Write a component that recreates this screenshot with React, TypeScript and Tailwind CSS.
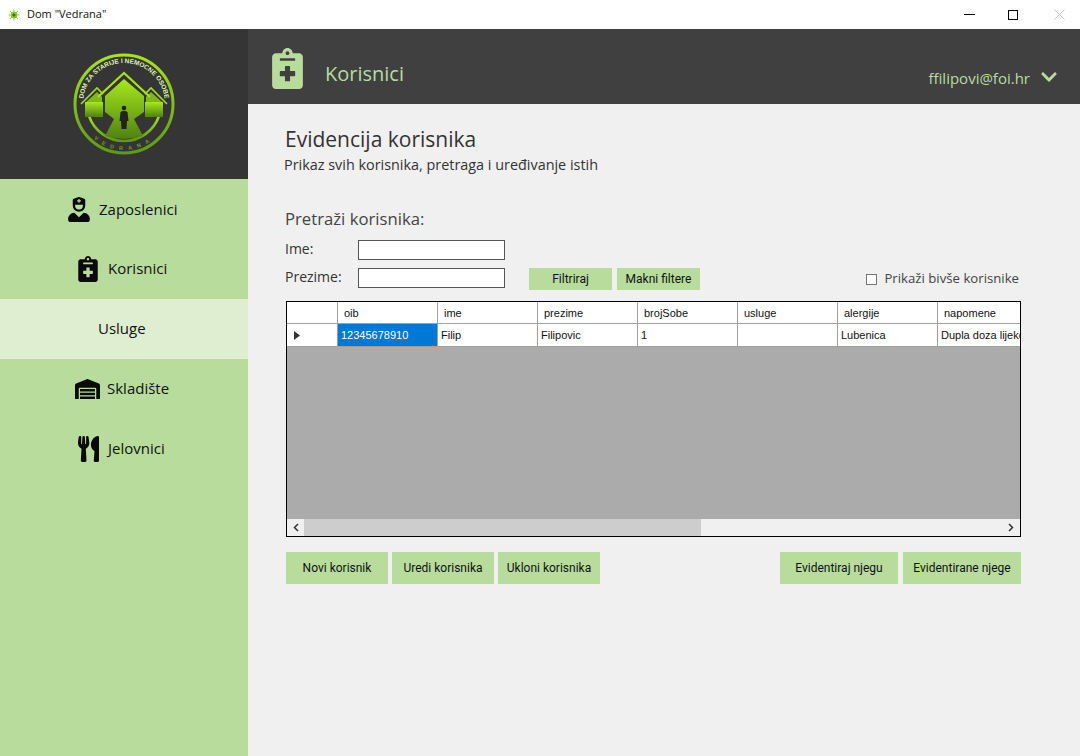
import { FaChevronDown, FaNotesMedical, FaUserNurse, FaUtensils, FaWarehouse } from "react-icons/fa";

const columns = ["oib", "ime", "prezime", "brojSobe", "usluge", "alergije", "napomene"];
const cells = ["12345678910", "Filip", "Filipovic", "1", "", "Lubenica", "Dupla doza lijekova"];

function Logo() {
  return (
    <svg width="104" height="104" viewBox="0 0 104 104">
      <defs>
        <linearGradient id="ring" x1="0" y1="0" x2="0" y2="1">
          <stop offset="0" stopColor="#a6e51a" />
          <stop offset="1" stopColor="#5f9a12" />
        </linearGradient>
        <linearGradient id="house" x1="0" y1="0" x2="0" y2="1">
          <stop offset="0" stopColor="#a8e81c" />
          <stop offset="1" stopColor="#4f8210" />
        </linearGradient>
        <path id="topArc" d="M 11 52 A 41 41 0 0 1 93 52" />
        <path id="bottomArc" d="M 10.3 71.4 A 46 46 0 0 0 93.7 71.4" />
      </defs>
      <circle cx="52" cy="52" r="49" fill="none" stroke="url(#ring)" strokeWidth="3" />
      <path d="M 17 64 A 37 37 0 0 0 87 64" fill="none" stroke="url(#ring)" strokeWidth="2.5" />
      {/* side roofs */}
      <path d="M 9 52 L 25 36 L 31 42 M 95 52 L 79 36 L 73 42" fill="none" stroke="#a0e01a" strokeWidth="1.6" />
      <path d="M 13 51 L 25 40 L 30 45 L 30 50 Z M 91 51 L 79 40 L 74 45 L 74 50 Z" fill="#7fb814" />
      {/* side blocks */}
      <path d="M 13 50 H 31 V 65 H 13 Z M 73 50 H 91 V 65 H 73 Z" fill="url(#house)" />
      {/* main roof */}
      <path d="M 26 45 L 52 21 L 78 45" fill="none" stroke="#a4e41a" strokeWidth="2.2" />
      {/* main house and road */}
      <path d="M 33 44 L 52 27 L 72 44 V 60 L 62 67 L 71 84 Q 52 90 33 84 L 42 67 L 33 60 Z" fill="url(#house)" />
      {/* person */}
      <circle cx="52" cy="56" r="2.3" fill="#222" />
      <path d="M 48.5 60 Q 52 57.5 55.5 60 L 56.5 69 L 55 69 L 54.5 77 L 49.5 77 L 49 69 L 47.5 69 Z" fill="#222" />
      <text fontFamily="'Liberation Sans', sans-serif" fontSize="6.5" fontWeight="700" fill="#def5a8">
        <textPath href="#topArc" startOffset="50%" textAnchor="middle">DOM ZA STARIJE I NEMOCNE OSOBE</textPath>
      </text>
      <text fontFamily="'Liberation Sans', sans-serif" fontSize="5.5" fontWeight="700" fill="#6f9a1f" letterSpacing="5.5">
        <textPath href="#bottomArc" startOffset="50%" textAnchor="middle">VEDRANA</textPath>
      </text>
    </svg>
  );
}

function AppIcon() {
  return (
    <svg width="12" height="12" viewBox="0 0 12 12" className="shrink-0">
      <circle cx="6" cy="6" r="3.2" fill="#7fbf1a" />
      <path d="M6 0.5V11.5M0.5 6H11.5M2 2L10 10M10 2L2 10" stroke="#8fcf2a" strokeWidth="1" />
      <circle cx="6" cy="6" r="1.5" fill="#3a6a10" />
    </svg>
  );
}

function NavItem({ label, icon, active, pl, gap, lift = "-mt-[2px]" }: { label: string; icon?: React.ReactNode; active?: boolean; pl: string; gap: string; lift?: string }) {
  return (
    <div className={`flex h-[60px] items-center ${pl} ${gap} ${active ? "bg-[#dfeed0]" : ""}`}>
      {icon}
      <span className={`${lift} font-['Open_Sans',sans-serif] text-[15px] text-[#111]`}>{label}</span>
    </div>
  );
}

function GreenButton({ label, w, h = "h-8" }: { label: string; w: string; h?: string }) {
  return (
    <div className={`flex ${w} ${h} items-center justify-center bg-[#b8dc9c] font-['Roboto',sans-serif] text-xs text-[#111]`}>
      {label}
    </div>
  );
}

export default function App() {
  return (
    <div className="flex h-[756px] w-[1080px] flex-col overflow-hidden bg-white font-['Open_Sans',sans-serif]">
      {/* title bar */}
      <div className="flex h-[29px] items-center bg-white pl-2">
        <AppIcon />
        <span className="ml-[7px] font-['Open_Sans',sans-serif] text-[11px] text-[#111]">Dom "Vedrana"</span>
        <div className="ml-auto flex items-center">
          <div className="h-px w-[11px] bg-black" />
          <div className="ml-[33px] h-[10px] w-[10px] border border-black" />
          <svg width="11" height="11" viewBox="0 0 11 11" className="ml-[36px] mr-[15px]">
            <path d="M0.5 0.5L10.5 10.5M10.5 0.5L0.5 10.5" stroke="#c4c4c4" strokeWidth="1" />
          </svg>
        </div>
      </div>

      <div className="flex min-h-0 flex-1">
        {/* sidebar */}
        <aside className="flex w-[248px] shrink-0 flex-col bg-[#b8dc9c]">
          <div className="flex h-[150px] items-center justify-center bg-[#353535]">
            <Logo />
          </div>
          <NavItem lift="mt-0" pl="pl-[68px]" gap="gap-[9px]" label="Zaposlenici" icon={<FaUserNurse className="h-[25px] w-[22px] text-[#0a0a0a]" />} />
          <NavItem pl="pl-[78px]" gap="gap-[10px]" label="Korisnici" icon={<FaNotesMedical className="h-[26px] w-[20px] text-[#0a0a0a]" />} />
          <NavItem active pl="pl-[98px]" gap="gap-0" label="Usluge" />
          <NavItem pl="pl-[75px]" gap="gap-[7px]" label="Skladište" icon={<FaWarehouse className="h-[20px] w-[25px] text-[#0a0a0a]" />} />
          <NavItem pl="pl-[78px]" gap="gap-[9px]" label="Jelovnici" icon={<FaUtensils className="h-[26px] w-[21px] text-[#0a0a0a]" />} />
        </aside>

        <main className="flex min-w-0 flex-1 flex-col bg-[#f0f0f0]">
          {/* header */}
          <header className="flex h-[75px] items-center bg-[#404040] pl-6 pr-[22px]">
            <FaNotesMedical className="mt-[4px] h-[41px] w-[31px] text-[#b8dc9c]" />
            <span className="ml-[22px] mt-[14px] text-[20px] text-[#b8dc9c]">Korisnici</span>
            <div className="ml-auto mt-[24px] flex items-center gap-[10px] text-[#b8dc9c]">
              <span className="text-[15px]">ffilipovi@foi.hr</span>
              <FaChevronDown className="-mt-[4px] h-[18px] w-[18px]" />
            </div>
          </header>

          <div className="flex flex-col pl-[36px]">
            <h1 className="ml-px mt-[21px] text-[21px] leading-7 text-[#333]">Evidencija korisnika</h1>
            <p className="mt-[2px] text-[14.4px] leading-5 text-[#333]">Prikaz svih korisnika, pretraga i uređivanje istih</p>

            <h2 className="ml-px mt-[32px] text-[16.7px] leading-6 text-[#444]">Pretraži korisnika:</h2>

            {/* filters */}
            <div className="ml-px mt-[9px] flex h-5 w-[735px] items-center">
              <span className="-mt-[2px] w-[73px] text-sm text-[#333]">Ime:</span>
              <div className="h-5 w-[147px] border border-[#555] bg-white" />
            </div>
            <div className="ml-px mt-2 flex h-5 w-[735px] items-center">
              <span className="-mt-[2px] w-[73px] text-sm text-[#333]">Prezime:</span>
              <div className="h-5 w-[147px] border border-[#555] bg-white" />
              <div className="ml-6 mt-[2px] flex gap-[5px]">
                <GreenButton label="Filtriraj" w="w-[83px]" h="h-[22px]" />
                <GreenButton label="Makni filtere" w="w-[83px]" h="h-[22px]" />
              </div>
              <div className="ml-auto mt-[2px] flex items-center gap-[7px] pr-px">
                <div className="h-[11px] w-[11px] border border-[#777] bg-white" />
                <span className="text-[13.2px] text-[#444]">Prikaži bivše korisnike</span>
              </div>
            </div>

            {/* grid */}
            <div className="ml-[2px] mt-[13px] flex h-[236px] w-[735px] flex-col overflow-hidden border border-black bg-[#ababab] font-['Liberation_Sans',sans-serif] text-[11px] text-[#111]">
              <div className="flex h-[21px] shrink-0 bg-white">
                <div className="w-[51px] shrink-0 border-r border-[#a0a0a0]" />
                {columns.map((c) => (
                  <div key={c} className="flex w-[100px] shrink-0 items-center border-r border-[#a0a0a0] pl-[6px] pt-[2px] last:border-r-0">
                    {c}
                  </div>
                ))}
              </div>
              <div className="flex h-[24px] shrink-0 border-y border-[#a0a0a0] bg-white">
                <div className="flex w-[51px] shrink-0 items-center border-r border-[#a0a0a0] pl-[7px]">
                  <svg width="6" height="9" viewBox="0 0 6 9"><path d="M0 0L6 4.5L0 9Z" fill="#333" /></svg>
                </div>
                {cells.map((c, i) => (
                  <div
                    key={c + i}
                    className={`flex w-[100px] shrink-0 items-center overflow-hidden whitespace-nowrap border-r border-[#a0a0a0] pl-[3px] last:border-r-0 ${i === 0 ? "bg-[#0078d7] text-white" : ""}`}
                  >
                    {c}
                  </div>
                ))}
              </div>
              {/* scrollbar */}
              <div className="mt-auto flex h-[17px] items-center bg-[#f0f0f0]">
                <div className="flex h-full w-[17px] items-center justify-center">
                  <svg width="6" height="9" viewBox="0 0 6 9"><path d="M5 1L1.5 4.5L5 8" fill="none" stroke="#333" strokeWidth="1.5" /></svg>
                </div>
                <div className="h-full w-[397px] bg-[#cdcdcd]" />
                <div className="ml-auto flex h-full w-[18px] items-center justify-center">
                  <svg width="6" height="9" viewBox="0 0 6 9"><path d="M1 1L4.5 4.5L1 8" fill="none" stroke="#333" strokeWidth="1.5" /></svg>
                </div>
              </div>
            </div>

            {/* actions */}
            <div className="ml-[2px] mt-[15px] flex w-[735px]">
              <div className="flex gap-1">
                <GreenButton label="Novi korisnik" w="w-[102px]" />
                <GreenButton label="Uredi korisnika" w="w-[102px]" />
                <GreenButton label="Ukloni korisnika" w="w-[102px]" />
              </div>
              <div className="ml-auto flex gap-[5px]">
                <GreenButton label="Evidentiraj njegu" w="w-[118px]" />
                <GreenButton label="Evidentirane njege" w="w-[118px]" />
              </div>
            </div>
          </div>
        </main>
      </div>
    </div>
  );
}
